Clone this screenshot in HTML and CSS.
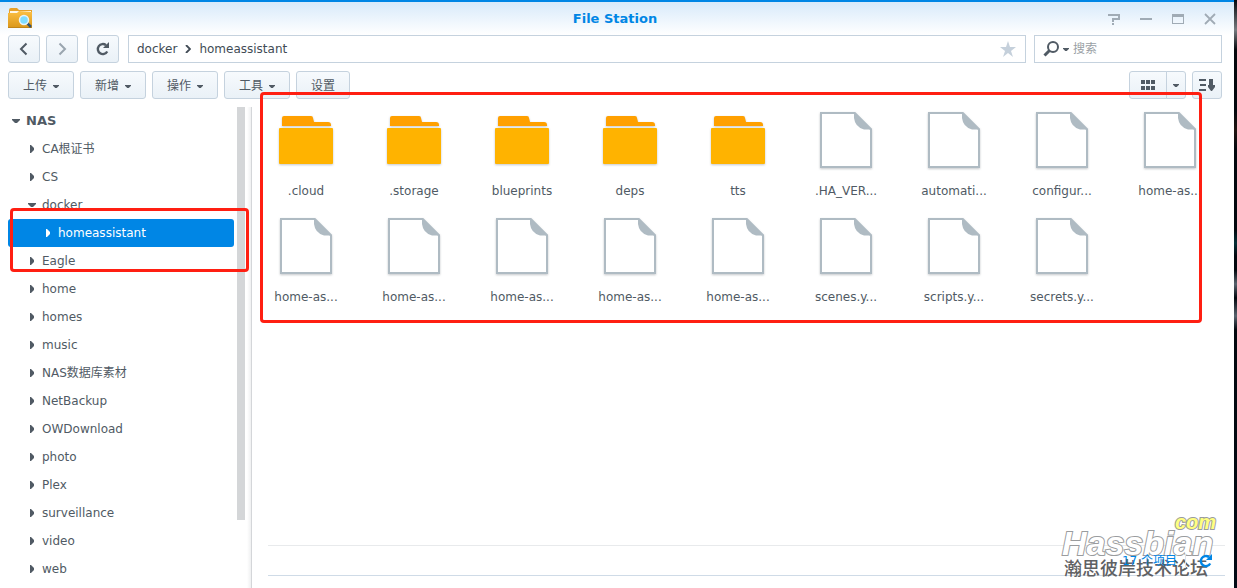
FILE: index.html
```
<!DOCTYPE html>
<html lang="zh-CN">
<head>
<meta charset="utf-8">
<title>File Station</title>
<link rel="stylesheet" href="styles.css">
</head>
<body>
<svg class="defs" aria-hidden="true">
  <defs>
    <linearGradient id="gold" x1="0" y1="0" x2="0" y2="1"><stop offset="0" stop-color="#fcc044"/><stop offset="1" stop-color="#dc991c"/></linearGradient>
    <symbol id="folder" viewBox="0 0 56 60">
      <path d="M4 15V7q0-2 2-2h27q2 0 2 2l1 4h14q3 0 3 3v1z" fill="#ffa000"/>
      <rect x="1" y="17" width="54" height="36" rx="1" fill="#ffb300"/>
    </symbol>
    <symbol id="file" viewBox="0 0 56 60">
      <path d="M3 2h33.500L53 18.500V56H3z" fill="#fff" stroke="#afbbc3" stroke-width="2"/>
      <path d="M36 1v6q1 9 10 11.500h8V18L37 1z" fill="#afbbc3"/>
    </symbol>
    <symbol id="down" viewBox="0 0 8 4"><path d="M0 0h8v1L5 4H3L0 1z" fill="currentColor"/></symbol>
    <symbol id="right" viewBox="0 0 4 8"><path d="M0 0h1l3 3v2L1 8H0z" fill="currentColor"/></symbol>
    <symbol id="reload" viewBox="0 0 14 14"><path d="M11.200 9.500A5 5 0 1 1 10 3.200" fill="none" stroke="currentColor" stroke-width="2.400"/><path d="M13 0v6H7z" fill="currentColor"/></symbol>
  </defs>
</svg>
<div class="desktop">
<div class="window">
  <header class="titlebar">
    <svg class="app-icon" viewBox="0 0 24 21" aria-hidden="true">
      <path d="M1 2q0-2 2-2h6l2 2h13v6H1z" fill="#e5a12a"/><path d="M2 3h21v4H2z" fill="#fff8e8"/>
      <path d="M0 5l9 0 2-2 13 1v15H0z" fill="url(#gold)"/><path d="M0 19h24v1H0z" fill="#c08418"/>
      <path d="M19 15l4 4" stroke="#35536d" stroke-width="2.500"/><circle cx="16" cy="12" r="4.500" fill="#7fdcff" stroke="#e8f3f8" stroke-width="1.500"/>
    </svg>
    <h1 class="title">File Station</h1>
    <div class="window-tools">
      <button class="tool" aria-label="帮助"><svg viewBox="0 0 12 12"><path d="M0 2h11v4H5v3M5 10v2" stroke="currentColor" stroke-width="2" fill="none"/></svg></button>
      <button class="tool" aria-label="最小化"><svg viewBox="0 0 12 12"><path d="M0 6h12" stroke="currentColor" stroke-width="2"/></svg></button>
      <button class="tool" aria-label="最大化"><svg viewBox="0 0 12 12"><path d="M0 1h12v10H0zM1 4v6h10V4z" fill="currentColor" fill-rule="evenodd"/></svg></button>
      <button class="tool" aria-label="关闭"><svg viewBox="0 0 12 12"><path d="M1 1l10 10M11 1L1 11" stroke="currentColor" stroke-width="1.800"/></svg></button>
    </div>
  </header>
  <div class="navbar">
    <button class="btn square" aria-label="后退"><svg class="i14" viewBox="0 0 14 14"><path d="M9.500 1.500L4 7l5.500 5.500" fill="none" stroke="currentColor" stroke-width="2"/></svg></button>
    <button class="btn square faded" aria-label="前进"><svg class="i14" viewBox="0 0 14 14"><path d="M4.500 1.500L10 7l-5.500 5.500" fill="none" stroke="currentColor" stroke-width="2"/></svg></button>
    <button class="btn square reload" aria-label="刷新"><svg class="i14"><use href="#reload"/></svg></button>
    <nav class="path" aria-label="路径">
      <a href="#docker">docker</a>
      <svg class="chevron" viewBox="0 0 6 8"><path d="M1 0l4 4-4 4" fill="none" stroke="currentColor" stroke-width="1.800"/></svg>
      <a href="#homeassistant">homeassistant</a>
      <svg class="star" viewBox="0 0 16 16"><path d="M8 0l2 6h6l-5 4 2 6-5-4-5 4 2-6-5-4h6z" fill="#c5d0db"/></svg>
    </nav>
    <label class="search">
      <svg class="lens" viewBox="0 0 16 16"><circle cx="10" cy="6" r="5" fill="none" stroke="currentColor" stroke-width="2"/><path d="M6.500 9.500L1.500 14.500" stroke="currentColor" stroke-width="3"/></svg>
      <svg class="caret small"><use href="#down"/></svg>
      <input type="text" placeholder="搜索" aria-label="搜索">
    </label>
  </div>
  <div class="toolbar">
    <button class="btn menu">上传<svg class="caret small"><use href="#down"/></svg></button>
    <button class="btn menu">新增<svg class="caret small"><use href="#down"/></svg></button>
    <button class="btn menu">操作<svg class="caret small"><use href="#down"/></svg></button>
    <button class="btn menu">工具<svg class="caret small"><use href="#down"/></svg></button>
    <button class="btn plain">设置</button>
    <div class="view">
      <button class="btn grid-btn" aria-label="图标视图"><svg class="grid-icon" viewBox="0 0 14 10"><path d="M0 0h4v4H0zM5 0h4v4H5zM10 0h4v4h-4zM0 6h4v4H0zM5 6h4v4H5zM10 6h4v4h-4z" fill="currentColor"/></svg></button>
      <button class="btn drop-btn" aria-label="更多视图"><svg class="caret small"><use href="#down"/></svg></button>
    </div>
    <button class="btn sort" aria-label="排序"><svg class="sort-icon" viewBox="0 0 16 12"><path d="M0 0h7v2H0zM1 5h6v2H1zM0 10h7v2H0zM10 0h4v6h2v2l-3 4h-1l-3-4V6h1z" fill="currentColor"/></svg></button>
  </div>
  <div class="body">
    <aside class="sidebar">
      <ul class="tree">
        <li class="node root"><svg class="caret"><use href="#down"/></svg>NAS</li>
        <li class="node"><svg class="arrow"><use href="#right"/></svg>CA根证书</li>
        <li class="node"><svg class="arrow"><use href="#right"/></svg>CS</li>
        <li class="node"><svg class="caret"><use href="#down"/></svg>docker</li>
        <li class="node selected"><svg class="arrow"><use href="#right"/></svg>homeassistant</li>
        <li class="node"><svg class="arrow"><use href="#right"/></svg>Eagle</li>
        <li class="node"><svg class="arrow"><use href="#right"/></svg>home</li>
        <li class="node"><svg class="arrow"><use href="#right"/></svg>homes</li>
        <li class="node"><svg class="arrow"><use href="#right"/></svg>music</li>
        <li class="node"><svg class="arrow"><use href="#right"/></svg>NAS数据库素材</li>
        <li class="node"><svg class="arrow"><use href="#right"/></svg>NetBackup</li>
        <li class="node"><svg class="arrow"><use href="#right"/></svg>OWDownload</li>
        <li class="node"><svg class="arrow"><use href="#right"/></svg>photo</li>
        <li class="node"><svg class="arrow"><use href="#right"/></svg>Plex</li>
        <li class="node"><svg class="arrow"><use href="#right"/></svg>surveillance</li>
        <li class="node"><svg class="arrow"><use href="#right"/></svg>video</li>
        <li class="node"><svg class="arrow"><use href="#right"/></svg>web</li>
      </ul>
      <div class="scroll"><div class="thumb"></div></div>
    </aside>
    <main class="content">
      <ul class="files">
        <li class="item"><svg class="icon"><use href="#folder"/></svg>.cloud</li>
        <li class="item"><svg class="icon"><use href="#folder"/></svg>.storage</li>
        <li class="item"><svg class="icon"><use href="#folder"/></svg>blueprints</li>
        <li class="item"><svg class="icon"><use href="#folder"/></svg>deps</li>
        <li class="item"><svg class="icon"><use href="#folder"/></svg>tts</li>
        <li class="item"><svg class="icon"><use href="#file"/></svg>.HA_VER...</li>
        <li class="item"><svg class="icon"><use href="#file"/></svg>automati...</li>
        <li class="item"><svg class="icon"><use href="#file"/></svg>configur...</li>
        <li class="item"><svg class="icon"><use href="#file"/></svg>home-as...</li>
        <li class="item"><svg class="icon"><use href="#file"/></svg>home-as...</li>
        <li class="item"><svg class="icon"><use href="#file"/></svg>home-as...</li>
        <li class="item"><svg class="icon"><use href="#file"/></svg>home-as...</li>
        <li class="item"><svg class="icon"><use href="#file"/></svg>home-as...</li>
        <li class="item"><svg class="icon"><use href="#file"/></svg>home-as...</li>
        <li class="item"><svg class="icon"><use href="#file"/></svg>scenes.y...</li>
        <li class="item"><svg class="icon"><use href="#file"/></svg>scripts.y...</li>
        <li class="item"><svg class="icon"><use href="#file"/></svg>secrets.y...</li>
      </ul>
      <footer class="status">
        <span class="count">17 个项目</span>
        <button class="refresh" aria-label="刷新列表"><svg class="i14"><use href="#reload"/></svg></button>
      </footer>
      <div class="mark mark-files"></div>
    </main>
    <div class="mark mark-tree"></div>
  </div>
  <div class="watermark">
    <span class="wm-com">com</span>
    <span class="wm-name">Hassbian</span>
    <span class="wm-sub">瀚思彼岸技术论坛</span>
  </div>
</div>
</div>
</body>
</html>
```
FILE: styles.css
```
* { box-sizing: border-box; }
body {
  margin: 0;
  font: 12px/18px "DejaVu Sans", "Noto Sans CJK SC", sans-serif;
  color: #505a64;
}
ul { list-style: none; margin: 0; padding: 0; }
button { font: inherit; color: inherit; padding: 0; }
a { color: inherit; text-decoration: none; }
svg { display: block; flex: none; }
.defs { position: absolute; width: 0; height: 0; }

.desktop {
  min-height: 100vh;
  padding-right: 3px;
  display: flex;
  background: linear-gradient(#05080c 0, #777b80 30px, #05080c 50px, #02080e 110px, #201512 130px, #02080e 150px, #02080e 230px, #063038 243px, #02080e 256px, #02080e 270px, #59636e 284px, #02080e 298px, #59636e 316px, #02080e 330px, #020b16 100%);
}
.window {
  flex: 1;
  min-width: 0;
  position: relative;
  display: flex;
  flex-direction: column;
  background: #fff;
  border-top: 2px solid #0086e5;
}

.titlebar {
  height: 33px;
  padding: 0 18px 0 14px;
  display: grid;
  grid-template-columns: 1fr auto 1fr;
  align-items: center;
  background: linear-gradient(#d8eafa, #fff);
}
.app-icon { width: 24px; height: 21px; margin-left: -6px; }
.title { margin: 0; font-size: 13px; line-height: 18px; color: #0086e5; }
.window-tools { display: flex; gap: 20px; justify-content: flex-end; color: #a0abb5; }
.tool { width: 12px; height: 12px; border: 0; background: none; }
.tool svg { width: 12px; height: 12px; }

.btn {
  height: 28px;
  display: flex;
  align-items: center;
  justify-content: center;
  border: 1px solid #c5d2de;
  border-radius: 3px;
  background: linear-gradient(#f7fafd, #eaf1f7);
}
.i14 { width: 14px; height: 14px; }
.caret { width: 8px; height: 4px; }
.caret.small { width: 6px; height: 3px; }

.navbar { display: flex; padding: 0 12px 0 8px; }
.square { width: 32px; margin-right: 6px; }
.faded { color: #9aa5af; }
.reload { margin: 0 9px 0 3px; }
.path {
  flex: 1;
  display: flex;
  align-items: center;
  gap: 8px;
  padding: 0 9px 0 8px;
  margin-right: 8px;
  border: 1px solid #c5d2de;
  color: #414b55;
}
.chevron { width: 6px; height: 8px; }
.star { width: 16px; height: 16px; margin-left: auto; }
.search {
  width: 188px;
  display: flex;
  align-items: center;
  padding-left: 8px;
  border: 1px solid #c5d2de;
}
.lens { width: 16px; height: 16px; margin-right: 4px; }
.search input {
  flex: 1;
  min-width: 0;
  margin-left: 4px;
  padding: 0;
  border: 0;
  outline: 0;
  font: inherit;
}
.search input::placeholder { color: #9a9fa5; }

.toolbar { display: flex; gap: 6px; padding: 8px 12px 0 8px; }
.menu { width: 66px; gap: 6px; }
.menu, .plain { padding-top: 2px; }
.plain { width: 54px; }
.view { display: flex; margin-left: auto; }
.grid-btn { width: 38px; border-radius: 3px 0 0 3px; }
.grid-icon { width: 14px; height: 10px; }
.drop-btn { width: 20px; margin-left: -1px; border-radius: 0 3px 3px 0; }
.sort { width: 30px; }
.sort-icon { width: 16px; height: 12px; }

.body { flex: 1; display: flex; padding-top: 8px; position: relative; }
.sidebar {
  width: 252px;
  display: flex;
  border-right: 1px solid #d4d6d9;
  background: linear-gradient(90deg, #fff 247px, #eff0f1);
}
.tree { flex: 1; padding-left: 8px; }
.node {
  height: 28px;
  display: flex;
  align-items: center;
  gap: 6px;
  padding-left: 20px;
  border-radius: 3px;
}
.arrow { width: 4px; height: 8px; margin: 0 2px; }
.root { padding-left: 4px; font-size: 13px; font-weight: bold; }
.selected { padding-left: 36px; color: #fff; background: #0086e5; }
.scroll { width: 17px; padding-left: 3px; }
.thumb { width: 8px; height: 413px; background: #d4d6d8; }

.content { flex: 1; min-width: 0; display: flex; flex-direction: column; position: relative; }
.files { display: grid; grid-template-columns: repeat(auto-fill, 108px); grid-auto-rows: 106px; }
.item { display: flex; flex-direction: column; align-items: center; gap: 11px; padding-top: 4px; white-space: nowrap; }
.icon { width: 56px; height: 60px; filter: drop-shadow(0 1px 1px rgba(60, 70, 80, .3)); }
.status {
  height: 31px;
  margin: auto 9px 12px 16px;
  padding-right: 12px;
  display: flex;
  align-items: center;
  justify-content: flex-end;
  gap: 8px;
  border-top: 1px solid #e8eaec;
  border-bottom: 1px solid #cfdbe7;
  color: #0086e5;
}
.count, .refresh { position: relative; z-index: 1; }
.refresh { padding-left: 13px; border: 0; border-left: 1px solid #dce3ea; background: none; }

.mark { position: absolute; border: 3px solid #ff1f12; border-radius: 4px; pointer-events: none; }
.mark-files { left: 8px; right: 32px; top: -15px; height: 231px; }
.mark-tree { left: 10px; top: 109px; width: 239px; height: 64px; }

.watermark {
  position: absolute;
  right: 18px;
  bottom: 8px;
  width: 154px;
  display: grid;
  justify-items: start;
  font-family: "Liberation Sans", "Noto Sans CJK SC", sans-serif;
  pointer-events: none;
}
.wm-com, .wm-name { font-style: italic; font-weight: bold; paint-order: stroke fill; -webkit-text-stroke: 2px #9a9c9e; }
.wm-com { justify-self: end; font-size: 20px; line-height: 12px; color: #ffff80; }
.wm-name { font-size: 34px; line-height: 30px; color: #fff; }
.wm-sub { padding-left: 2px; font-size: 18px; line-height: 22px; font-weight: 500; color: #5f6163; }
```
